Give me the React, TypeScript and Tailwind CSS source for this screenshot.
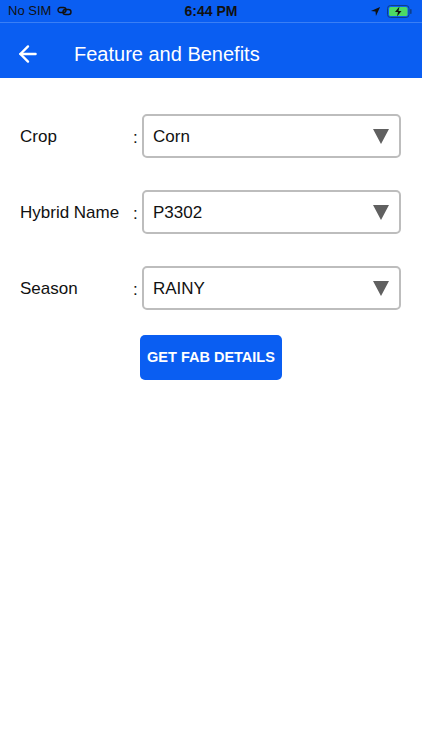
import { ArrowLeft } from 'lucide-react';

const font = { fontFamily: '"Liberation Sans", Arial, sans-serif' };

const rows = [
  { label: 'Crop', value: 'Corn' },
  { label: 'Hybrid Name', value: 'P3302' },
  { label: 'Season', value: 'RAINY' },
];

const StatusBar = () => (
  <div className="h-[22px] flex items-center justify-between px-[8px] text-[13px] text-[#111]">
    <div className="flex items-center gap-[6px] w-[120px]">
      <span>No SIM</span>
      <svg width="15" height="10" viewBox="0 0 15 10" fill="none" stroke="#111" strokeWidth="1.4">
        <rect x="1" y="1.5" width="8" height="5" rx="2.5" />
        <rect x="6" y="3.5" width="8" height="5" rx="2.5" />
      </svg>
    </div>
    <span className="font-bold text-[14px]">6:44 PM</span>
    <div className="flex items-center justify-end gap-[6px] w-[120px] pr-[2px]">
      <svg width="11" height="11" viewBox="0 0 12 12" fill="#111">
        <path d="M11 1 L1 5.5 L6 6 L6.5 11 Z" />
      </svg>
      <svg width="25" height="13" viewBox="0 0 25 13">
        <rect x="0.5" y="0.5" width="21.5" height="12" rx="3" fill="none" stroke="#0d3f8a" strokeWidth="1" />
        <rect x="2" y="2" width="18.5" height="9" rx="1.6" fill="#4cd964" />
        <rect x="23" y="4" width="1.6" height="5" rx="0.8" fill="#0d3f8a" />
        <path d="M12.5 1.5 L8 7 L11 7 L10 11.5 L14.5 6 L11.5 6 Z" fill="#111" />
      </svg>
    </div>
  </div>
);

export default function App() {
  return (
    <div className="w-[422px] h-[750px] bg-white" style={font}>
      <div className="bg-[#0a5ef2]">
        <StatusBar />
        <div className="h-[56px] flex items-center pt-[6px] border-t border-[#3a7ff5]">
          <ArrowLeft className="ml-[15px] w-[26px] h-[26px] text-white" strokeWidth={2.2} />
          <span className="ml-[33px] text-[20px] text-white">Feature and Benefits</span>
        </div>
      </div>

      <div className="pt-[36px] flex flex-col gap-[32px]">
        {rows.map((r) => (
          <div key={r.label} className="flex items-center pl-[20px] pr-[21px]">
            <span className="w-[113px] text-[17px] text-[#111] pt-[2px]">{r.label}</span>
            <span className="w-[9px] text-[17px] text-[#111] pt-[4px]">:</span>
            <div className="flex-1 h-[44px] border-2 border-[#bdbdbd] rounded-[5px] flex items-center justify-between pl-[9px] pr-[10px]">
              <span className="text-[17px] text-[#111] pt-[1px]">{r.value}</span>
              <svg width="16" height="15" viewBox="0 0 16 15">
                <path d="M0 0 H16 L8 15 Z" fill="#606060" />
              </svg>
            </div>
          </div>
        ))}
      </div>

      <div className="pt-[25px] pl-[140px]">
        <button className="w-[142px] h-[45px] bg-[#0a5ef2] rounded-[5px] text-white font-bold text-[14.5px]">
          GET FAB DETAILS
        </button>
      </div>
    </div>
  );
}
